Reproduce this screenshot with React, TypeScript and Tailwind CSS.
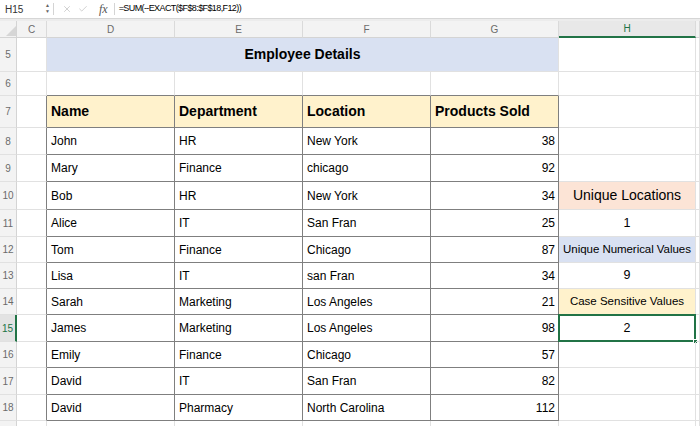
import React from "react";
import { X, Check } from "lucide-react";

const FONT = { fontFamily: '"Liberation Sans", Arial, sans-serif' };

type Row = {
  n: number;
  h: string;
  name: string;
  dept: string;
  loc: string;
  sold: number;
};

const rows: Row[] = [
  { n: 8, h: "h-[27px]", name: "John", dept: "HR", loc: "New York", sold: 38 },
  { n: 9, h: "h-[27px]", name: "Mary", dept: "Finance", loc: "chicago", sold: 92 },
  { n: 10, h: "h-[28px]", name: "Bob", dept: "HR", loc: "New York", sold: 34 },
  { n: 11, h: "h-[27px]", name: "Alice", dept: "IT", loc: "San Fran", sold: 25 },
  { n: 12, h: "h-[26px]", name: "Tom", dept: "Finance", loc: "Chicago", sold: 87 },
  { n: 13, h: "h-[26px]", name: "Lisa", dept: "IT", loc: "san Fran", sold: 34 },
  { n: 14, h: "h-[26px]", name: "Sarah", dept: "Marketing", loc: "Los Angeles", sold: 21 },
  { n: 15, h: "h-[27px]", name: "James", dept: "Marketing", loc: "Los Angeles", sold: 98 },
  { n: 16, h: "h-[26px]", name: "Emily", dept: "Finance", loc: "Chicago", sold: 57 },
  { n: 17, h: "h-[27px]", name: "David", dept: "IT", loc: "San Fran", sold: 82 },
  { n: 18, h: "h-[26px]", name: "David", dept: "Pharmacy", loc: "North Carolina", sold: 112 },
];

const GRID = "grid grid-cols-[17px_30px_128px_128px_128px_128px_137px_1fr]";

function C({
  className = "",
  children,
}: {
  className?: string;
  children?: React.ReactNode;
}) {
  return (
    <div
      className={
        "relative flex items-center overflow-visible whitespace-nowrap border-r border-b " +
        className
      }
    >
      {children}
    </div>
  );
}

const RH = "justify-center bg-[#f3f3f3] border-r-[#d4d4d4] border-b-[#e1e1e1] text-[10px] text-[#6b6b6b]";
const RH_SEL = "justify-center bg-[#e3e3e3] border-r-2 border-r-[#217346] border-b-[#e1e1e1] text-[10px] text-[#217346]";

function RowHeader({ n, sel }: { n: number; sel?: boolean }) {
  return <C className={sel ? RH_SEL : RH}>{n}</C>;
}

function HCell({ n }: { n: number }) {
  const base = "justify-center border-r-[#e1e1e1] border-b-[#e1e1e1] text-black";
  if (n === 10)
    return <C className={base + " bg-[#fce4d6] text-[14px]"}>Unique Locations</C>;
  if (n === 11) return <C className={base + " text-[12.5px]"}>1</C>;
  if (n === 12)
    return (
      <C className={base + " bg-[#d9e1f2] text-[11.5px] tracking-[-0.05px]"}>
        Unique Numerical Values
      </C>
    );
  if (n === 13) return <C className={base + " text-[12.5px]"}>9</C>;
  if (n === 14)
    return (
      <C className={base + " bg-[#fff2cc] text-[11.5px]"}>Case Sensitive Values</C>
    );
  if (n === 15)
    return (
      <C className={base + " text-[12.5px]"}>
        2
        <div className="absolute -left-px -top-px right-[-1px] bottom-[-1px] border-2 border-[#217346]" />
        <div className="absolute right-[-3px] bottom-[-3px] w-[5px] h-[5px] bg-[#217346] border border-white" />
      </C>
    );
  return <C className={base} />;
}

export default function App() {
  const grid = "border-r-[#e1e1e1] border-b-[#e1e1e1]";
  const td = "border-r-[#7f7f7f] border-b-[#7f7f7f] text-[12px] text-black";
  return (
    <div className="w-[700px] h-[426px] overflow-hidden bg-white" style={FONT}>
      {/* formula bar */}
      <div className="h-[19px] flex items-center bg-white border-b border-[#d6d6d6] text-[10px] text-[#333]">
        <div className="w-[53px] h-full flex items-center pl-[5px] relative">
          <span>H15</span>
          <div className="absolute left-[45px] top-[3px] flex flex-col items-center leading-none text-[5px] text-[#666]">
            <span>▲</span>
            <span className="mt-[1px]">▼</span>
          </div>
        </div>
        <div className="w-px h-[12px] bg-[#d4d4d4]" />
        <div className="ml-[8px] flex items-center text-[#b5b5b5]">
          <X size={10} strokeWidth={1.5} />
        </div>
        <div className="ml-[6px] flex items-center text-[#b5b5b5]">
          <Check size={10} strokeWidth={1.5} />
        </div>
        <div
          className="ml-[11px] italic text-[12px] text-[#555]"
          style={{ fontFamily: '"Liberation Serif", serif' }}
        >
          fx
        </div>
        <div className="ml-[6px] w-px h-[12px] bg-[#d4d4d4]" />
        <div className="ml-[4px] text-[9px] tracking-[-0.6px] text-black">
          =SUM(--EXACT($F$8:$F$18,F12))
        </div>
      </div>
      <div className="h-[2px] bg-[#ececec]" />

      <div className={GRID}>
        {/* column header */}
        <C className="h-[17px] bg-[#f3f3f3] border-r-[#d4d4d4] border-b-[#d4d4d4]">
          <svg className="absolute left-[6px] top-[5px]" width="10" height="10" viewBox="0 0 10 10">
            <path d="M10 0 L10 10 L0 10 Z" fill="#d6d6d6" />
          </svg>
        </C>
        {["C", "D", "E", "F", "G"].map((l) => (
          <C
            key={l}
            className="h-[17px] justify-center bg-[#f3f3f3] border-r-[#dadada] border-b-[#d4d4d4] text-[10px] text-[#6b6b6b]"
          >
            {l}
          </C>
        ))}
        <C className="h-[17px] justify-center bg-[#e8e8e8] border-r-[#dadada] border-b-2 border-b-[#217346] text-[10px] text-[#217346]">
          H
        </C>
        <C className="h-[17px] bg-[#f3f3f3] border-r-[#dadada] border-b-[#d4d4d4]" />

        {/* row 5 */}
        <RowHeader n={5} />
        <C className={"h-[34px] " + grid} />
        <C className="col-span-4 justify-center bg-[#d9e1f2] border-r-[#e1e1e1] border-b-[#e1e1e1] font-bold text-[14px] text-black">
          Employee Details
        </C>
        <C className={grid} />
        <C className={grid} />

        {/* row 6 */}
        <RowHeader n={6} />
        <C className={"h-[24px] " + grid} />
        <C className="border-r-[#e1e1e1] border-b-[#7f7f7f]" />
        <C className="border-r-[#e1e1e1] border-b-[#7f7f7f]" />
        <C className="border-r-[#e1e1e1] border-b-[#7f7f7f]" />
        <C className="border-r-[#e1e1e1] border-b-[#7f7f7f]" />
        <C className={grid} />
        <C className={grid} />

        {/* row 7 */}
        <RowHeader n={7} />
        <C className="h-[32px] border-r-[#7f7f7f] border-b-[#e1e1e1]" />
        {["Name", "Department", "Location", "Products Sold"].map((t) => (
          <C
            key={t}
            className="bg-[#fff2cc] border-r-[#7f7f7f] border-b-[#7f7f7f] pl-[4px] font-bold text-[14px] text-black"
          >
            {t}
          </C>
        ))}
        <C className={grid} />
        <C className={grid} />

        {rows.map((r) => (
          <React.Fragment key={r.n}>
            <RowHeader n={r.n} sel={r.n === 15} />
            <C className={r.h + " border-r-[#7f7f7f] border-b-[#e1e1e1]"} />
            <C className={td + " pl-[4px]"}>{r.name}</C>
            <C className={td + " pl-[4px]"}>{r.dept}</C>
            <C className={td + " pl-[4px]"}>{r.loc}</C>
            <C className={td + " justify-end pr-[3px]"}>{r.sold}</C>
            <HCell n={r.n} />
            <C className={grid} />
          </React.Fragment>
        ))}

        {/* row 19 */}
        <C className="h-[20px] items-start pt-[6px] justify-center bg-[#f3f3f3] border-r-[#d4d4d4] border-b-[#e1e1e1] text-[10px] text-[#6b6b6b]">
          19
        </C>
        <C className={grid} />
        <C className={grid} />
        <C className={grid} />
        <C className={grid} />
        <C className={grid} />
        <C className={grid} />
        <C className={grid} />
      </div>
    </div>
  );
}
